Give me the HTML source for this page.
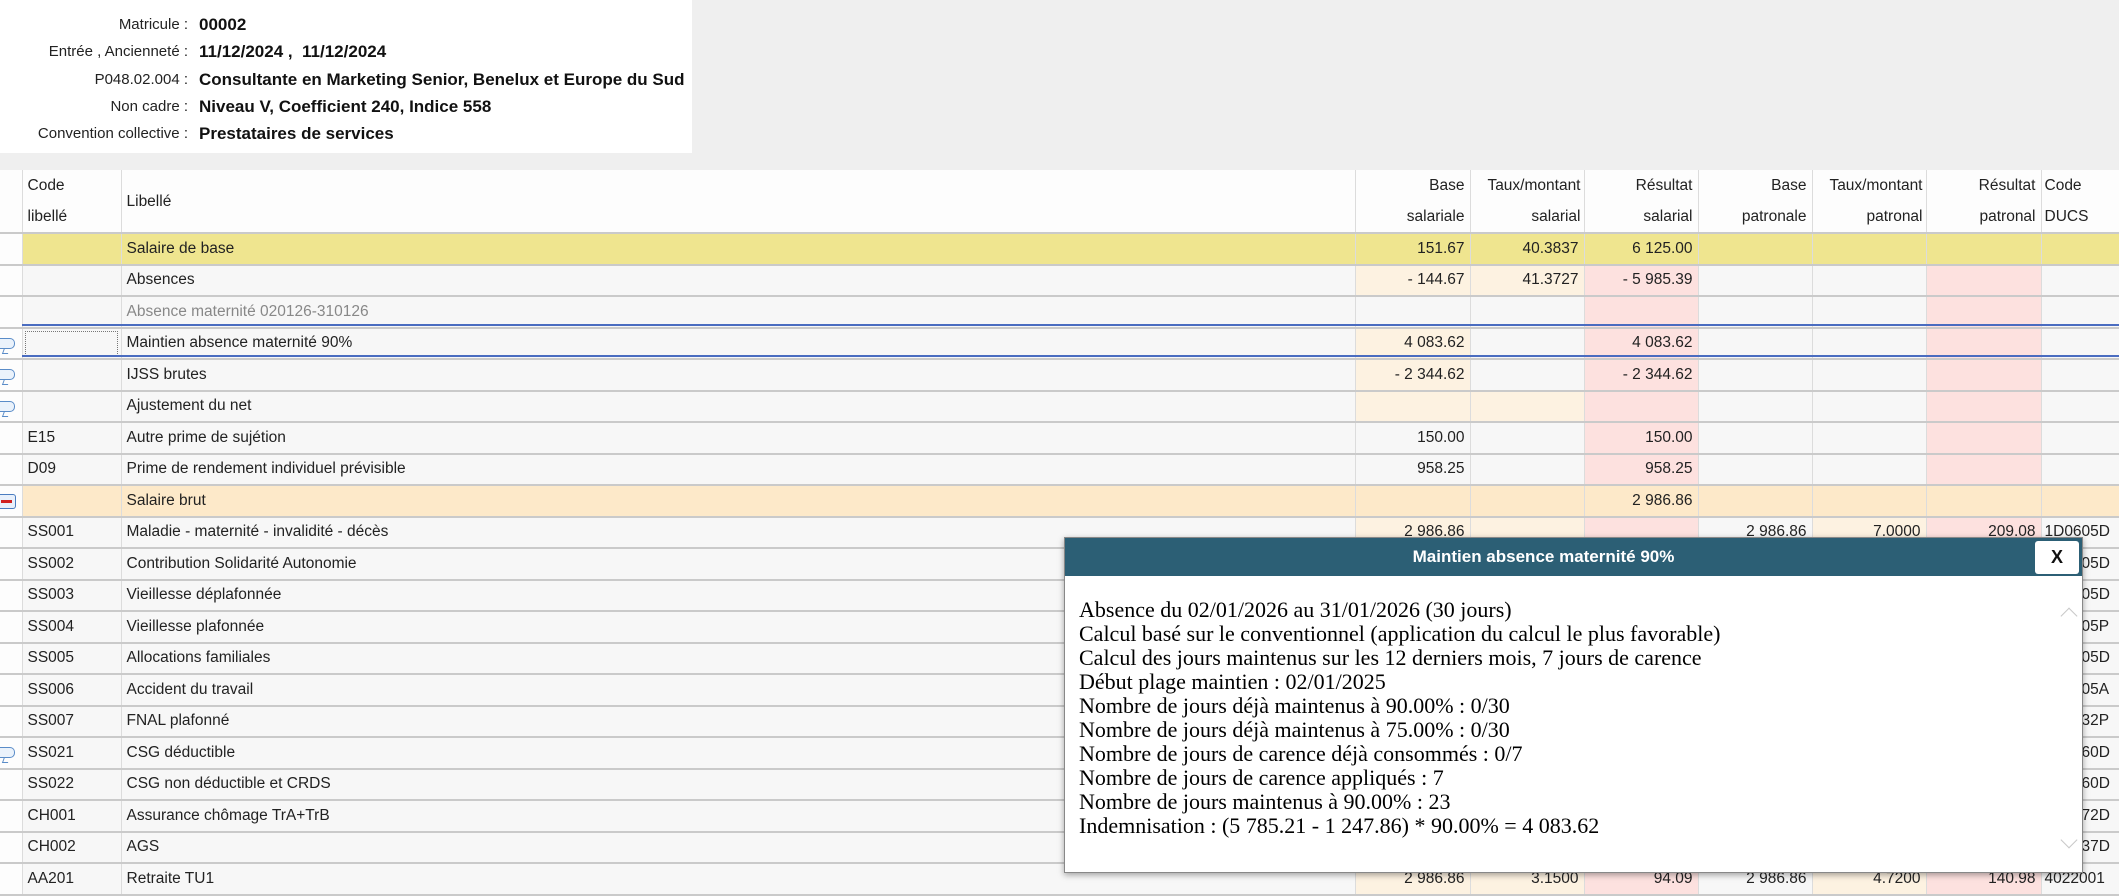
<!DOCTYPE html>
<html><head><meta charset="utf-8">
<style>
*{margin:0;padding:0;box-sizing:border-box}
body{width:2119px;height:889px;overflow:hidden;background:#efefef;font-family:"Liberation Sans",sans-serif;position:relative}
#info{position:absolute;left:0;top:0;width:692px;height:153px;background:#fff}
#info .l{position:absolute;right:calc(692px - 188px);font-size:15px;color:#222;white-space:nowrap}
#info .v{position:absolute;left:199px;font-size:17px;font-weight:bold;color:#111;white-space:nowrap;width:493px;overflow:hidden}
table{position:absolute;left:0;top:170px;border-collapse:collapse;table-layout:fixed;width:2119px;font-size:15.5px;color:#222}
td{border-left:1px solid #dcdcdc;border-bottom:2px solid #cacaca;height:31.5px;padding:0 5px;white-space:nowrap;overflow:hidden;background:#f7f7f7}
td.n{text-align:right}
tr.h td{height:59px;background:#fdfdfd;font-weight:normal;line-height:31px;vertical-align:middle}
tr.y td{background:#efe58f}
tr.b td{background:#fde9c9}
td.p{background:#fdf2e1}
td.r{background:#fde1df}
td.ic{border-left:none;padding:0;background:#fdfdfd;position:relative}
tr.y td.ic,tr.b td.ic{background:#fdfdfd}
.bl{position:absolute;left:22px;width:2097px;height:2px;background:#4a6cc0}
.bub{position:absolute;left:0;top:9px;width:15px;height:11px;border:1.5px solid #5a8cc8;border-left:none;border-radius:0 5px 5px 0;background:#eaf2fb}
.bub:after{content:"";position:absolute;left:3px;top:9px;width:5px;height:5px;border-left:1.5px solid #5a8cc8;border-bottom:1.5px solid #5a8cc8;transform:skewX(-20deg)}
.min{position:absolute;left:0;top:8px;width:16px;height:15px;border:1.5px solid #4a7cc0;border-left:none;border-radius:0 3px 3px 0;background:#e8f0fb}
.min:after{content:"";position:absolute;left:1px;top:5px;width:11px;height:3px;background:#d02020}
#modal{position:absolute;left:1064px;top:537px;width:1019px;height:336px;background:#fff;border:1px solid #888;box-shadow:0 2px 6px rgba(0,0,0,.35)}
#mh{height:38px;background:#2c5f75;color:#fff;font-weight:bold;font-size:17px;text-align:center;line-height:38px;padding-right:60px}
#mx{position:absolute;right:3px;top:3px;width:44px;height:33px;background:#fff;border-radius:3px;font-weight:bold;font-size:18px;text-align:center;line-height:33px;color:#111}
#mb{position:absolute;left:14px;top:60px;font-family:"Liberation Serif",serif;font-size:22px;line-height:24px;color:#000;white-space:nowrap}
.ar{position:absolute;left:998px;width:12px;height:12px;border-left:1.5px solid #c8c8c8;border-top:1.5px solid #c8c8c8}
</style></head><body>
<div id="info">
<div class="l" style="top:16px">Matricule :</div><div class="v" style="top:15px">00002</div>
<div class="l" style="top:43px">Entrée , Ancienneté :</div><div class="v" style="top:42px">11/12/2024 ,&nbsp; 11/12/2024</div>
<div class="l" style="top:71px">P048.02.004 :</div><div class="v" style="top:70px">Consultante en Marketing Senior, Benelux et Europe du Sud</div>
<div class="l" style="top:98px">Non cadre :</div><div class="v" style="top:97px">Niveau V, Coefficient 240, Indice 558</div>
<div class="l" style="top:125px">Convention collective :</div><div class="v" style="top:124px">Prestataires de services</div>
</div>
<table>
<colgroup><col style="width:22px"><col style="width:99px"><col style="width:1234px"><col style="width:115px"><col style="width:114px"><col style="width:114px"><col style="width:114px"><col style="width:114px"><col style="width:115px"><col style="width:78px"></colgroup>
<tr class="h"><td class="ic"></td><td>Code<br>libellé</td><td>Libellé</td><td class="n">Base<br>salariale</td><td class="n" style="padding-right:3px">Taux/montant<br>salarial</td><td class="n">Résultat<br>salarial</td><td class="n">Base<br>patronale</td><td class="n" style="padding-right:3px">Taux/montant<br>patronal</td><td class="n">Résultat<br>patronal</td><td style="padding-left:3px">Code<br>DUCS</td></tr>
<tr class="y"><td class="ic"></td><td></td><td>Salaire de base</td><td class="n">151.67</td><td class="n">40.3837</td><td class="n">6 125.00</td><td></td><td></td><td></td><td></td></tr>
<tr><td class="ic"></td><td></td><td>Absences</td><td class="n p">- 144.67</td><td class="n p">41.3727</td><td class="n r">- 5 985.39</td><td></td><td></td><td class="r"></td><td></td></tr>
<tr><td class="ic"></td><td></td><td style="color:#888">Absence maternité 020126-310126</td><td></td><td></td><td class="r"></td><td></td><td></td><td class="r"></td><td></td></tr>
<tr><td class="ic"><div class="bub"></div></td><td style="outline:1px dotted #777;outline-offset:-4px"></td><td>Maintien absence maternité 90%</td><td class="n p">4 083.62</td><td></td><td class="n r">4 083.62</td><td></td><td></td><td class="r"></td><td></td></tr>
<tr><td class="ic"><div class="bub"></div></td><td></td><td>IJSS brutes</td><td class="n p">- 2 344.62</td><td></td><td class="n r">- 2 344.62</td><td></td><td></td><td class="r"></td><td></td></tr>
<tr><td class="ic"><div class="bub"></div></td><td></td><td>Ajustement du net</td><td class="p"></td><td class="p"></td><td class="r"></td><td></td><td></td><td class="r"></td><td></td></tr>
<tr><td class="ic"></td><td>E15</td><td>Autre prime de sujétion</td><td class="n">150.00</td><td></td><td class="n r">150.00</td><td></td><td></td><td class="r"></td><td></td></tr>
<tr><td class="ic"></td><td>D09</td><td>Prime de rendement individuel prévisible</td><td class="n">958.25</td><td></td><td class="n r">958.25</td><td></td><td></td><td class="r"></td><td></td></tr>
<tr class="b"><td class="ic"><div class="min"></div></td><td></td><td>Salaire brut</td><td></td><td></td><td class="n">2 986.86</td><td></td><td></td><td></td><td></td></tr>
<tr><td class="ic"></td><td>SS001</td><td>Maladie - maternité - invalidité - décès</td><td class="n p">2 986.86</td><td class="p"></td><td class="r"></td><td class="n">2 986.86</td><td class="n p">7.0000</td><td class="n r">209.08</td><td style="padding-left:3px">1D0605D</td></tr>
<tr><td class="ic"></td><td>SS002</td><td>Contribution Solidarité Autonomie</td><td class="n p">2 986.86</td><td class="p"></td><td class="r"></td><td></td><td></td><td class="r"></td><td style="padding-left:3px">1D0605D</td></tr>
<tr><td class="ic"></td><td>SS003</td><td>Vieillesse déplafonnée</td><td class="n p">2 986.86</td><td class="p"></td><td class="r"></td><td></td><td></td><td class="r"></td><td style="padding-left:3px">1D0605D</td></tr>
<tr><td class="ic"></td><td>SS004</td><td>Vieillesse plafonnée</td><td class="n p">2 986.86</td><td class="p"></td><td class="r"></td><td></td><td></td><td class="r"></td><td style="padding-left:3px">1D0605P</td></tr>
<tr><td class="ic"></td><td>SS005</td><td>Allocations familiales</td><td class="n p">2 986.86</td><td class="p"></td><td class="r"></td><td></td><td></td><td class="r"></td><td style="padding-left:3px">1D0605D</td></tr>
<tr><td class="ic"></td><td>SS006</td><td>Accident du travail</td><td class="n p">2 986.86</td><td class="p"></td><td class="r"></td><td></td><td></td><td class="r"></td><td style="padding-left:3px">1D0605A</td></tr>
<tr><td class="ic"></td><td>SS007</td><td>FNAL plafonné</td><td class="n p">2 986.86</td><td class="p"></td><td class="r"></td><td></td><td></td><td class="r"></td><td style="padding-left:3px">1D0632P</td></tr>
<tr><td class="ic"><div class="bub"></div></td><td>SS021</td><td>CSG déductible</td><td class="n p">2 986.86</td><td class="p"></td><td class="r"></td><td></td><td></td><td class="r"></td><td style="padding-left:3px">1D0660D</td></tr>
<tr><td class="ic"></td><td>SS022</td><td>CSG non déductible et CRDS</td><td class="n p">2 986.86</td><td class="p"></td><td class="r"></td><td></td><td></td><td class="r"></td><td style="padding-left:3px">1D0660D</td></tr>
<tr><td class="ic"></td><td>CH001</td><td>Assurance chômage TrA+TrB</td><td class="n p">2 986.86</td><td class="p"></td><td class="r"></td><td></td><td></td><td class="r"></td><td style="padding-left:3px">1D0672D</td></tr>
<tr><td class="ic"></td><td>CH002</td><td>AGS</td><td class="n p">2 986.86</td><td class="p"></td><td class="r"></td><td></td><td></td><td class="r"></td><td style="padding-left:3px">1D0637D</td></tr>
<tr><td class="ic"></td><td>AA201</td><td>Retraite TU1</td><td class="n p">2 986.86</td><td class="n p">3.1500</td><td class="n r">94.09</td><td class="n">2 986.86</td><td class="n p">4.7200</td><td class="n r">140.98</td><td style="padding-left:3px">4022001</td></tr>
</table>
<div class="bl" style="top:324px"></div>
<div class="bl" style="top:355px"></div>
<div id="modal">
<div id="mh">Maintien absence maternité 90%</div>
<div id="mx">X</div>
<div id="mb">Absence du 02/01/2026 au 31/01/2026 (30 jours)<br>Calcul basé sur le conventionnel (application du calcul le plus favorable)<br>Calcul des jours maintenus sur les 12 derniers mois, 7 jours de carence<br>Début plage maintien : 02/01/2025<br>Nombre de jours déjà maintenus à 90.00% : 0/30<br>Nombre de jours déjà maintenus à 75.00% : 0/30<br>Nombre de jours de carence déjà consommés : 0/7<br>Nombre de jours de carence appliqués : 7<br>Nombre de jours maintenus à 90.00% : 23<br>Indemnisation : (5 785.21 - 1 247.86) * 90.00% = 4 083.62</div>
<div class="ar" style="top:72px;transform:rotate(45deg)"></div>
<div class="ar" style="top:296px;transform:rotate(225deg)"></div>
</div>
</body></html>
